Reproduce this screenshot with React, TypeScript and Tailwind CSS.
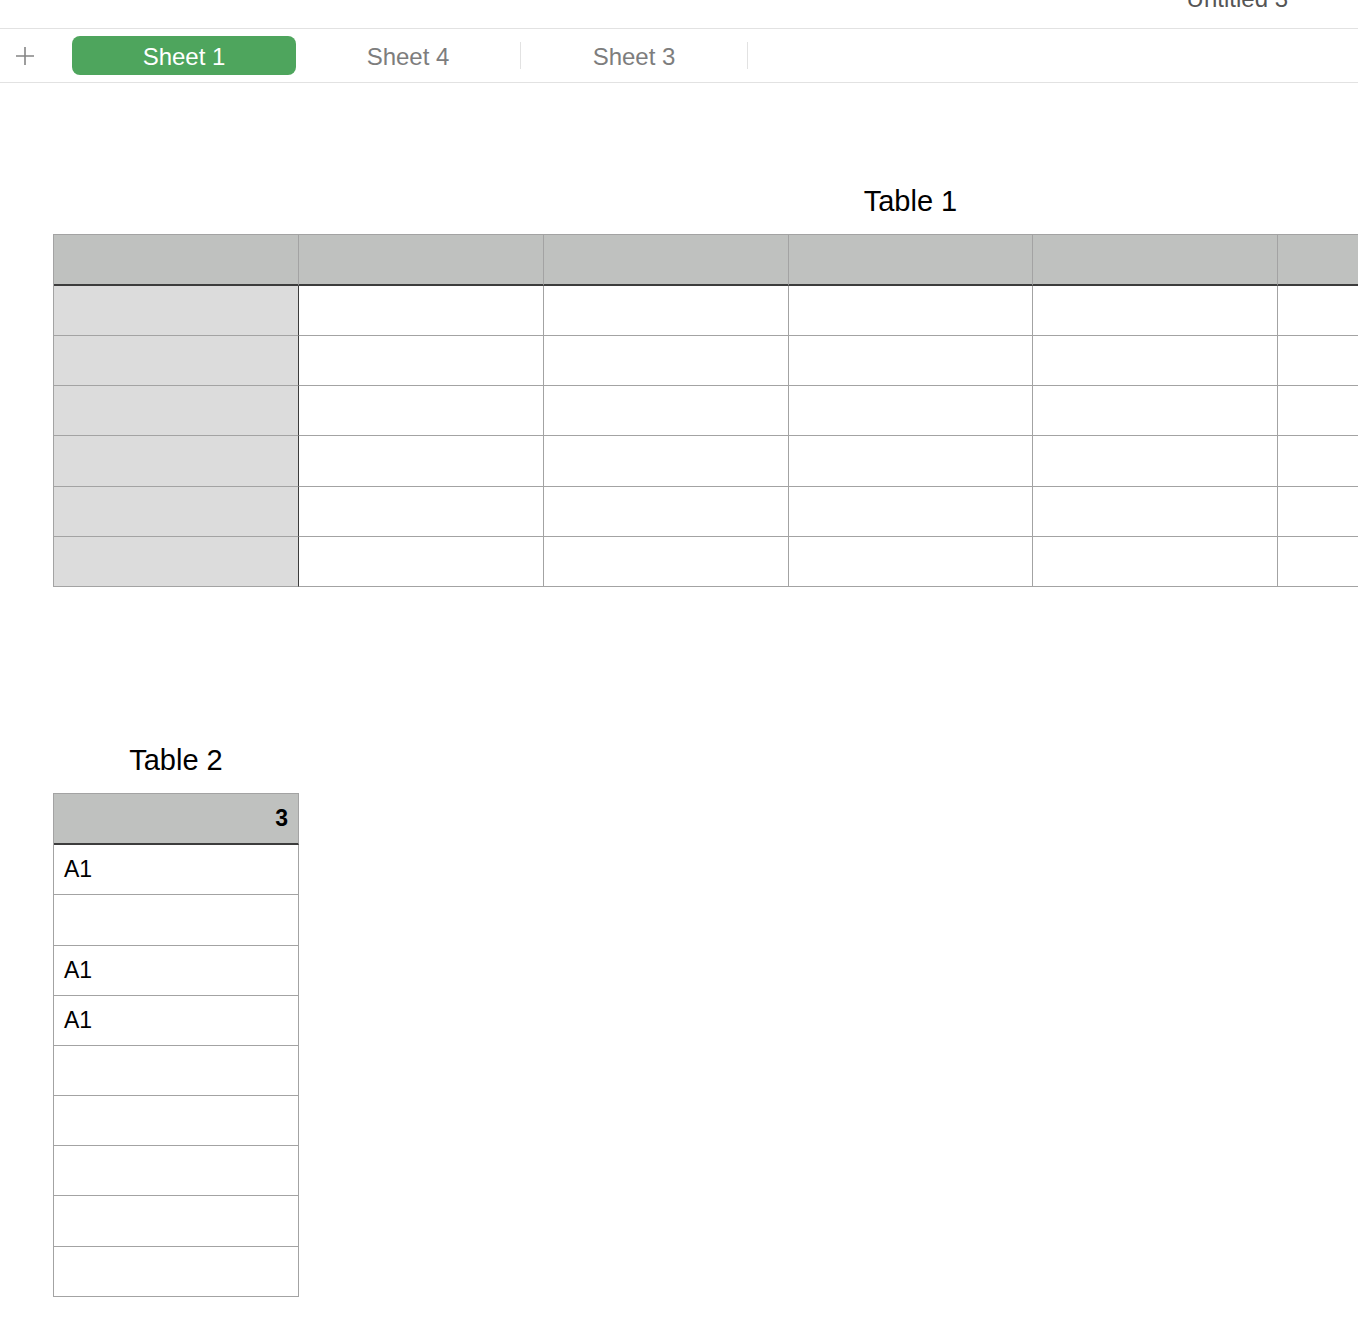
import React from 'react';

const font = { fontFamily: '"Liberation Sans", Arial, sans-serif' };

const cols = [0, 1, 2, 3, 4, 5, 6];
const rows1 = [50, 50, 50, 51, 50, 50];
const rows2 = [
  { t: 'A1', h: 50 },
  { t: '', h: 51 },
  { t: 'A1', h: 50 },
  { t: 'A1', h: 50 },
  { t: '', h: 50 },
  { t: '', h: 50 },
  { t: '', h: 50 },
  { t: '', h: 51 },
  { t: '', h: 50 },
];

export default function App() {
  return (
    <div className="w-[1358px] h-[1344px] overflow-hidden bg-white" style={font}>
      {/* window title strip */}
      <div className="h-[28px] overflow-hidden flex justify-end pr-[70px]">
        <span className="text-[24px] leading-[24px] mt-[-13px] text-[#555555]">Untitled 3</span>
      </div>

      {/* sheet tabs */}
      <div className="h-[55px] border-y border-[#e2e2e2] flex items-center">
        <div className="w-[72px] flex items-center justify-center pr-[22px]">
          <svg width="20" height="20" viewBox="0 0 20 20" className="text-[#858585]">
            <path d="M10 1v18M1 10h18" stroke="currentColor" strokeWidth="1.6" />
          </svg>
        </div>
        <div className="w-[224px] h-[39px] rounded-[8px] bg-[#4ea55d] flex items-center justify-center pt-[2px] text-white text-[24px] font-medium">
          Sheet 1
        </div>
        <div className="w-[224px] flex items-center justify-center pt-[2px] text-[24px] text-[#7d7d7d]">Sheet 4</div>
        <div className="w-px h-[27px] bg-[#e2e2e2]" />
        <div className="w-[226px] flex items-center justify-center pt-[2px] text-[24px] text-[#7d7d7d]">Sheet 3</div>
        <div className="w-px h-[27px] bg-[#e2e2e2]" />
      </div>

      <div className="pl-[53px]">
        {/* Table 1 */}
        <div className="w-[1715px] mt-[101px]">
          <div className="text-center text-[29px] leading-[34px] text-black mb-[16px]">Table 1</div>
          <div className="border-l border-t border-[#a3a3a3]">
            <div className="flex">
              {cols.map((c) => (
                <div key={c} className="w-[245px] h-[51px] bg-[#bfc1bf] border-r border-[#a3a3a3] border-b-2 border-b-[#3c3c3c]" />
              ))}
            </div>
            {rows1.map((h, r) => (
              <div key={r} className="flex" style={{ height: h }}>
                {cols.map((c) => (
                  <div
                    key={c}
                    className={
                      c === 0
                        ? 'w-[245px] h-full bg-[#dcdcdc] border-r border-r-[#3c3c3c] border-b border-b-[#a3a3a3]'
                        : 'w-[245px] h-full bg-white border-r border-b border-[#a3a3a3]'
                    }
                  />
                ))}
              </div>
            ))}
          </div>
        </div>

        {/* Table 2 */}
        <div className="w-[246px] mt-[156px]">
          <div className="text-center text-[29px] leading-[34px] text-black mb-[16px]">Table 2</div>
          <div className="border-l border-t border-[#a3a3a3]">
            <div className="h-[51px] bg-[#bfc1bf] border-r border-[#a3a3a3] border-b-2 border-b-[#3c3c3c] flex items-center justify-end pr-[10px] text-[23px] font-bold text-black">
              3
            </div>
            {rows2.map((row, i) => (
              <div
                key={i}
                className="border-r border-b border-[#a3a3a3] flex items-center pl-[10px] text-[23px] text-black"
                style={{ height: row.h }}
              >
                {row.t}
              </div>
            ))}
          </div>
        </div>
      </div>
    </div>
  );
}
